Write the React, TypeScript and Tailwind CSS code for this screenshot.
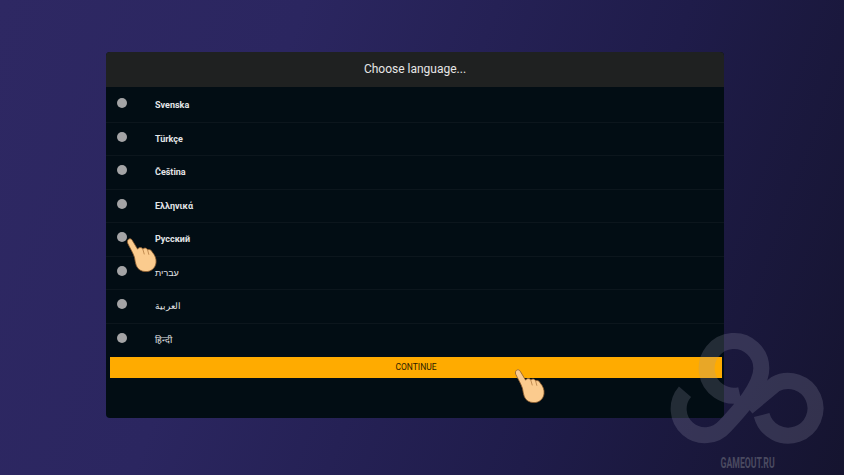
import React from 'react';

const languages = ['Svenska', 'Türkçe', 'Čeština', 'Ελληνικά', 'Русский', 'עברית', 'العربية', 'हिन्दी'];

const Hand: React.FC<{ className: string }> = ({ className }) => (
  <svg className={className} viewBox="0 0 32 36" width="32" height="36">
    <path
      d="M1.6 3.6C2.4 1.4 5 1.2 6.2 3.2L11.6 12.2C12.6 10.2 15.6 10 16.8 12C18 10.4 20.8 10.8 21.6 12.8C23.2 12 25.4 12.8 26.2 15C28.8 18 30.6 21.6 30 26C29.2 31.2 25.2 34.6 20 34.6C15.4 34.6 12 32.6 10.4 28.8C9.4 26 9 23.4 8.6 20.8C7.4 16.2 3.4 10 1.8 6.4C1.4 5.4 1.2 4.6 1.6 3.6Z"
      fill="#fbcb8e"
      stroke="#8a5a2c"
      strokeWidth="0.8"
      strokeLinejoin="round"
    />
    <path d="M16.8 12L18.2 17M21.6 12.8L22.8 17.4" fill="none" stroke="#b47c42" strokeWidth="0.8" strokeLinecap="round" />
  </svg>
);

const Watermark: React.FC = () => (
  <div className="absolute left-[660px] top-[320px] w-[184px] h-[155px] pointer-events-none">
    <svg className="opacity-[0.22]" viewBox="0 0 552 465" width="184" height="155" fill="none" stroke="#9a9ab0" strokeWidth="48">
      <path d="M75 215A78 78 0 1 0 195 318C240 270 304 200 304 145A82 82 0 1 0 240 225" />
      <path d="M262 262L345 193A82 82 0 1 1 305 285" />
    </svg>
    <div className="absolute left-[59px] top-[133px] w-[58px] flex justify-center">
      <span className="scale-x-[0.62] text-[14px] font-bold text-[#4a4a60] whitespace-nowrap font-['Roboto',sans-serif]">GAMEOUT.RU</span>
    </div>
  </div>
);

export default function App() {
  return (
    <div className="relative w-[844px] h-[475px] overflow-hidden bg-[linear-gradient(110deg,#2e2863_0%,#2b2660_30%,#1f1c4a_68%,#15142f_100%)] pt-[52px] pl-[106px] font-['Roboto',sans-serif]">
      <div className="w-[618px] h-[366px] bg-[#020d14] rounded-[4px] overflow-hidden">
        <div className="h-[35px] pb-[2px] bg-[#1f2121] flex items-center justify-center text-[12px] text-[#e6e6e6]">
          Choose language...
        </div>
        <div className="h-[270px] pt-[2px]">
          {languages.map((lang, i) => (
            <div key={lang} className="h-[33.5px] flex items-center pl-[11px] border-b border-[#0c161d] last:border-b-0">
              <span className="w-[10px] h-[10px] rounded-full bg-[#a4a4a6] -mt-[4px]" />
              <span className={`ml-[28px] mt-[1px] text-[9px] text-[#e4e6e8] ${i < 5 ? 'font-bold' : ''}`}>{lang}</span>
            </div>
          ))}
        </div>
        <div className="ml-[4px] mr-[2px] h-[21px] bg-[#ffab00] flex items-center justify-center text-[8.5px] text-[#2a1c00]">
          CONTINUE
        </div>
      </div>
      <Hand className="absolute left-[126px] top-[237px]" />
      <Hand className="absolute left-[514px] top-[368px]" />
      <Watermark />
    </div>
  );
}
